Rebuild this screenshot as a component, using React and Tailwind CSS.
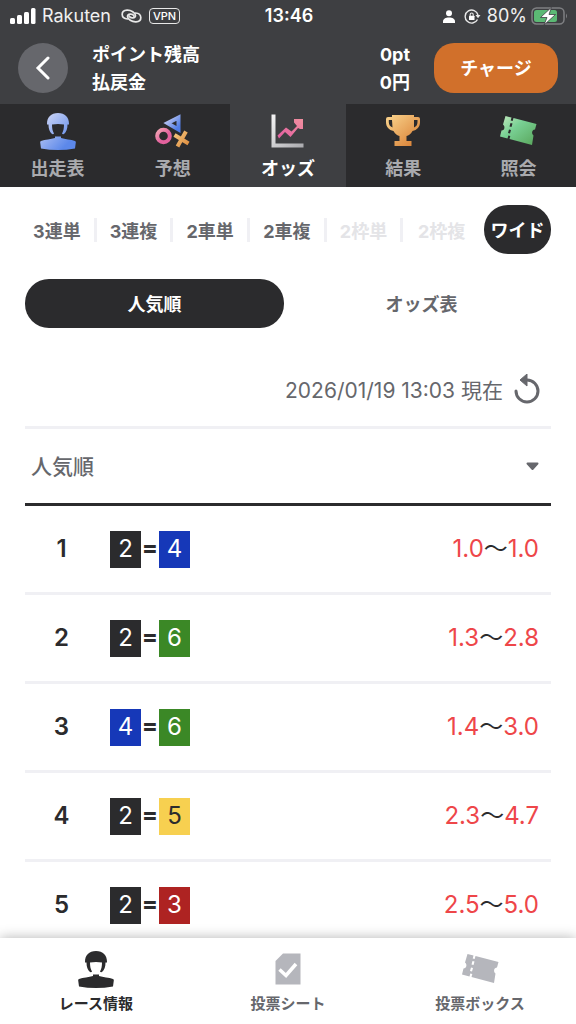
import React, { useState } from "react";

const betTypes = [
    { name: "3連単" },
    { name: "3連複" },
    { name: "2車単" },
    { name: "2車複" },
    { name: "2枠単", disabled: true },
    { name: "2枠複", disabled: true },
];

const oddsList = [
    { rank: 1, pair: [2, 4], low: "1.0", high: "1.0" },
    { rank: 2, pair: [2, 6], low: "1.3", high: "2.8" },
    { rank: 3, pair: [4, 6], low: "1.4", high: "3.0" },
    { rank: 4, pair: [2, 5], low: "2.3", high: "4.7" },
    { rank: 5, pair: [2, 3], low: "2.5", high: "5.0" },
];

// Bike number colors
const numberColors = {
    2: "bg-[#2b2b2d] text-white",
    3: "bg-[#ae2322] text-white",
    4: "bg-[#1638b8] text-white",
    5: "bg-[#f7d050] text-[#2b2b2d]",
    6: "bg-[#3b8826] text-white",
};

const RiderIcon = ({ fill }) => (
    <svg width="38" height="38" viewBox="0 0 38 38" fill={fill} aria-hidden="true">
        <defs>
            <linearGradient id="blue" x1="0" y1="0" x2="1" y2="1">
                <stop offset="0.15" stopColor="#c5d0f5" />
                <stop offset="0.8" stopColor="#5c88ea" />
            </linearGradient>
        </defs>
        <path d="M8 12C8 5 12 1 19 1s11 4 11 11v.5h-1.500c0 4-1 7.500-3.500 9.500q-1.500.5-2-.5c1.500-2.500 2-5.500 2-9Q19 11.500 13 12.500c0 3.500.5 6.500 2 9q-.5 1-2 .5c-2.500-2-3.500-5.500-3.500-9.500H8zM16 24.500h6v1.500c4 1.500 10 1.300 14 3q1 .5.8 1.500L36 36.500Q19 39.500 2 36.500L1.200 30.500Q1 29.500 2 29c4-1.700 10-1.500 14-3z" />
    </svg>
);

const PredictIcon = () => (
    <svg width="38" height="38" viewBox="0 0 38 38" fill="none" aria-hidden="true">
        <defs>
            <linearGradient id="tri" x1="0" y1="0" x2="1" y2="1">
                <stop offset="0.2" stopColor="#a9b9ef" />
                <stop offset="0.9" stopColor="#4f7ce6" />
            </linearGradient>
            <linearGradient id="ring" x1="0" y1="0" x2="1" y2="1">
                <stop offset="0" stopColor="#f2a6b4" />
                <stop offset="0.6" stopColor="#e3619d" />
            </linearGradient>
            <linearGradient id="cross" x1="0" y1="0" x2="1" y2="1">
                <stop offset="0" stopColor="#f6c981" />
                <stop offset="1" stopColor="#dd8a3c" />
            </linearGradient>
        </defs>
        <path d="M24.500 5.500v12L13.500 11.200z" stroke="url(#tri)" strokeWidth="4" />
        <circle cx="9.500" cy="24" r="6.300" stroke="url(#ring)" strokeWidth="4" />
        <path d="M20.500 23l14 8.500M32 19.500l-8.500 15" stroke="url(#cross)" strokeWidth="4" />
    </svg>
);

const ChartIcon = () => (
    <svg width="38" height="38" viewBox="0 0 38 38" fill="none" aria-hidden="true">
        <defs>
            <linearGradient id="axis" x1="0" y1="0" x2="1" y2="1">
                <stop offset="0" stopColor="#f5f5f6" />
                <stop offset="1" stopColor="#a9a9ad" />
            </linearGradient>
            <linearGradient id="pink" x1="0" y1="1" x2="1" y2="0">
                <stop offset="0" stopColor="#e35ba0" />
                <stop offset="1" stopColor="#f0909f" />
            </linearGradient>
        </defs>
        <path d="M2.500 2.500h4v29h28v4h-32z" fill="url(#axis)" />
        <path d="M8.500 23.500l8.500-8 5.500 4 5.500-5.500-3-3.500V7h9v10h-3l-2-1-7.500 9-5.500-5-6 6.500z" fill="url(#pink)" />
    </svg>
);

const TrophyIcon = () => (
    <svg width="38" height="38" viewBox="0 0 38 38" aria-hidden="true">
        <defs>
            <linearGradient id="gold" x1="0" y1="0" x2="1" y2="1">
                <stop offset="0.1" stopColor="#f7cd86" />
                <stop offset="0.9" stopColor="#da8338" />
            </linearGradient>
        </defs>
        <path
            fill="url(#gold)"
            fillRule="evenodd"
            d="M8 3h22v2h4q2 0 2 2v3c0 5-3 8-7.500 9-1.500 3-4 4.500-6 5v5h5v5h-17v-5h5v-5c-2-.5-4.500-2-6-5C5 18 2 15 2 10V7q0-2 2-2h4zM8 8H4.800v2q0 4 3.700 5.500zM30 8v7.500q3.500-1.500 3.500-5.500V8z"
        />
    </svg>
);

const TicketIcon = ({ fill }) => (
    <svg width="38" height="38" viewBox="0 0 38 38" fill={fill} aria-hidden="true">
        <defs>
            <linearGradient id="green" x1="0" y1="0" x2="1" y2="1">
                <stop offset="0.1" stopColor="#b2e3b4" />
                <stop offset="0.4" stopColor="#79d094" />
                <stop offset="1" stopColor="#58a55a" />
            </linearGradient>
        </defs>
        <path d="M6.500 4l6 1.500-.8 3 2 .5.8-3L37.500 12l-1.500 5.500c-3 0-4 4-1.500 6L33 33 10.500 27l.8-3-2-.5-.8 3L1 24.500l1.500-6c3 0 4-4 1.500-6zM11.500 11l-1 3.500 2 .5 1-3.500zM10 17.500l-1 3.500 2 .5 1-3.500z" fillRule="evenodd" />
    </svg>
);

const SheetIcon = () => (
    <svg width="38" height="38" viewBox="0 0 38 38" aria-hidden="true">
        <path d="M14 3.500h17.500v31h-25V11z" fill="#b5b6bc" />
        <path d="M10.500 19.500l6.500 6L27 14" fill="none" stroke="#fff" strokeWidth="3.500" />
    </svg>
);

const StatusBar = () => (
    <div className="grid grid-cols-[1fr_auto_1fr] items-center h-8 pl-[10px] pr-2 text-white text-lg">
        <div className="flex items-center">
            <svg width="26" height="16" viewBox="0 0 26 16" fill="#fff" aria-hidden="true">
                <rect x="0" y="10" width="5" height="6" rx="1.500" />
                <rect x="7" y="7" width="5" height="9" rx="1.500" />
                <rect x="14" y="4" width="5" height="12" rx="1.500" />
                <rect x="21" y="0" width="4.500" height="16" rx="1.500" />
            </svg>
            <span className="ml-[6px] text-[#f0f0f0]">Rakuten</span>
            <svg className="ml-[10px]" width="21" height="14" viewBox="0 0 21 14" fill="none" stroke="#e8e8e8" strokeWidth="1.700" strokeLinecap="round" aria-hidden="true">
                <path d="M6.500 10C-.5 9.500-.5 1.500 6 1.200c4-.2 8.500 2.500 8.500 5.300 0 2.800-5 3.500-6.500.5" />
                <path d="M14.500 4c7 .5 7 8.500.5 8.800-4 .2-8.500-2.500-8.500-5.300 0-2.800 5-3.500 6.500-.5" />
            </svg>
            <span className="ml-[7px] flex h-4 items-center rounded border-[1px] border-[#e8e8e8] px-[3px] text-[11px] font-medium leading-none">VPN</span>
        </div>
        <span className="font-semibold">13:46</span>
        <div className="flex items-center justify-end">
            <svg width="12" height="13" viewBox="0 0 12 13" fill="#fff" aria-hidden="true">
                <circle cx="6" cy="3.200" r="3" />
                <path d="M0 13v-1.500C0 9 2.500 7.500 6 7.500S12 9 12 11.500V13z" />
            </svg>
            <svg className="ml-[9px]" width="17" height="15" viewBox="0 0 17 15" fill="none" stroke="#e8e8e8" strokeWidth="1.400" aria-hidden="true">
                <path d="M13.500 10.500A6.500 6.500 0 1 1 14 6" />
                <path d="M11.500 6h5L14 9.300z" fill="#e8e8e8" stroke="none" />
                <rect x="5" y="6.700" width="5.500" height="4.300" rx=".6" fill="#fff" stroke="none" />
                <path d="M6.200 7V5.500q0-1.500 1.500-1.500t1.500 1.500V7" strokeWidth="1.100" />
            </svg>
            <span className="ml-[6px] text-[#f0f0f0]">80%</span>
            <svg className="ml-1" width="37" height="18" viewBox="0 0 37 18" aria-hidden="true">
                <rect x="1" y="1" width="32" height="16" rx="4.500" fill="none" stroke="#7f8083" strokeWidth="1.500" />
                <rect x="3" y="3" width="23" height="12" rx="2.500" fill="#5bb974" />
                <path d="M35 6.500q2 2.500 0 5z" fill="#7f8083" />
                <path d="M20.500.3l-11 10.200h6.500l-3 7.500 11.500-10.500h-6.500z" fill="#fff" stroke="#3e3f42" strokeWidth=".8" />
            </svg>
        </div>
    </div>
);

const mainTabs = [
    { name: "出走表", icon: <RiderIcon fill="url(#blue)" /> },
    { name: "予想", icon: <PredictIcon /> },
    { name: "オッズ", icon: <ChartIcon /> },
    { name: "結果", icon: <TrophyIcon /> },
    { name: "照会", icon: <TicketIcon fill="url(#green)" /> },
];

const footerTabs = [
    { name: "レース情報", icon: <RiderIcon fill="#2b2b2d" />, active: true },
    { name: "投票シート", icon: <SheetIcon /> },
    { name: "投票ボックス", icon: <TicketIcon fill="#b5b6bc" /> },
];

const App = () => {
    const [tab, setTab] = useState("オッズ");
    const [betType, setBetType] = useState("ワイド");
    const [view, setView] = useState("人気順");
    const [sort, setSort] = useState("人気順");

    return (
        <div className="flex h-screen flex-col bg-white font-['Inter','Noto_Sans_CJK_JP',sans-serif] text-[#2b2b2d]">
            <header className="shrink-0 bg-[#3e3f42]">
                <StatusBar />
                <div className="flex h-[72px] items-center pl-[18px] pr-[18px] text-lg font-bold text-white">
                    <button aria-label="戻る" className="flex size-[50px] items-center justify-center rounded-full bg-[#66676c]">
                        <svg width="16" height="24" viewBox="0 0 16 24" fill="none" stroke="#fff" strokeWidth="3" strokeLinecap="round" aria-hidden="true">
                            <path d="M13 2L3 12l10 10" />
                        </svg>
                    </button>
                    <dl className="ml-6 mr-6 grid flex-1 grid-cols-[1fr_auto] pt-[2px] leading-7">
                        <dt>ポイント残高</dt>
                        <dd className="text-right">0pt</dd>
                        <dt>払戻金</dt>
                        <dd className="text-right">0円</dd>
                    </dl>
                    <button className="h-[50px] w-[124px] rounded-[20px] bg-[#d1702b] pt-[2px]">チャージ</button>
                </div>
            </header>

            <nav className="grid shrink-0 grid-cols-5 bg-[#2b2b2d]">
                {mainTabs.map((item) => (
                    <button
                        key={item.name}
                        onClick={() => setTab(item.name)}
                        className={`flex h-[83px] flex-col items-center pt-2 text-lg font-bold ${tab === item.name ? "bg-[#3e3f42] text-white" : "text-[#a9aaae]"}`}
                    >
                        {item.icon}
                        <span className="mt-[5px]">{item.name}</span>
                    </button>
                ))}
            </nav>

            <main className="flex-1 overflow-y-auto px-[25px] [scrollbar-width:none]">
                <div className="-ml-[5px] mt-[18px] flex items-center text-lg font-bold">
                    <div className="grid flex-1 grid-cols-6 divide-x-3 divide-[#f0f0f4]">
                        {betTypes.map((type) => (
                            <button
                                key={type.name}
                                disabled={type.disabled}
                                onClick={() => setBetType(type.name)}
                                className="h-6 pt-[2px] leading-6 text-[#66676c] disabled:text-[#e4e4e7]"
                            >
                                {type.name}
                            </button>
                        ))}
                    </div>
                    <button
                        onClick={() => setBetType("ワイド")}
                        className={`ml-1 h-[49px] w-[67px] rounded-3xl pt-[2px] ${betType === "ワイド" ? "bg-[#2b2b2d] text-white" : "text-[#66676c]"}`}
                    >
                        ワイド
                    </button>
                </div>

                <div className="mt-[25px] grid grid-cols-2 gap-2 text-lg font-bold">
                    {["人気順", "オッズ表"].map((name) => (
                        <button
                            key={name}
                            onClick={() => setView(name)}
                            className={`h-[49px] rounded-3xl pt-[2px] ${view === name ? "bg-[#2b2b2d] text-white" : "text-[#66676c]"}`}
                        >
                            {name}
                        </button>
                    ))}
                </div>

                <div className="mt-[25px] flex h-[76px] items-center justify-end border-b-3 border-[#f0f0f4] pr-2 text-[21px] text-[#66676c]">
                    <p className="pt-[2px]">2026/01/19 13:03 現在</p>
                    <button aria-label="更新" className="ml-2">
                        <svg width="32" height="32" viewBox="0 0 32 32" aria-hidden="true">
                            <path d="M5 17a11 11 0 1 0 11-11" fill="none" stroke="#66676c" strokeWidth="3" strokeLinecap="round" />
                            <path d="M16 0v12L9 6z" fill="#66676c" stroke="#66676c" strokeLinejoin="round" />
                        </svg>
                    </button>
                </div>

                <div className="grid items-center border-b-3 border-[#2b2b2d]">
                    <select
                        aria-label="並び順"
                        value={sort}
                        onChange={(e) => setSort(e.target.value)}
                        className="col-start-1 row-start-1 h-[74px] w-full appearance-none bg-transparent px-[6px] pt-[2px] text-[21px] font-medium text-[#66676c]"
                    >
                        <option>人気順</option>
                    </select>
                    <svg className="pointer-events-none col-start-1 row-start-1 mr-3 justify-self-end" width="13" height="9" viewBox="0 0 13 9" aria-hidden="true">
                        <path d="M1.500 1.500h10l-5 5.500z" fill="#66676c" stroke="#66676c" strokeWidth="2" strokeLinejoin="round" />
                    </svg>
                </div>

                <table className="w-full border-separate border-spacing-0 text-2xl">
                    <tbody>
                        {oddsList.map((odds) => (
                            <tr key={odds.rank} className="h-[89px] *:border-b-3 *:border-[#f0f0f4]">
                                <th scope="row" className="w-[73px] font-semibold">{odds.rank}</th>
                                <td className="pl-3">
                                    <div className="flex items-center">
                                        <span className={`h-[37px] w-[31px] text-center leading-9 ${numberColors[odds.pair[0]]}`}>{odds.pair[0]}</span>
                                        <span className="w-[18px] pb-[3px] text-center font-bold">=</span>
                                        <span className={`h-[37px] w-[31px] text-center leading-9 ${numberColors[odds.pair[1]]}`}>{odds.pair[1]}</span>
                                    </div>
                                </td>
                                <td className="pr-3 text-right text-[#ee4649]">
                                    {odds.low}<span className="text-[#2b2b2d]">〜</span>{odds.high}
                                </td>
                            </tr>
                        ))}
                    </tbody>
                </table>
            </main>

            <footer className="z-10 grid h-[86px] shrink-0 grid-cols-3 bg-white shadow-[0_0_12px_rgba(0,0,0,0.3)]">
                {footerTabs.map((item) => (
                    <button
                        key={item.name}
                        className={`flex flex-col items-center pt-3 text-[15px] font-bold ${item.active ? "text-[#2b2b2d]" : "text-[#66676c]"}`}
                    >
                        {item.icon}
                        <span className="mt-[5px]">{item.name}</span>
                    </button>
                ))}
            </footer>
        </div>
    );
};

export default App;
